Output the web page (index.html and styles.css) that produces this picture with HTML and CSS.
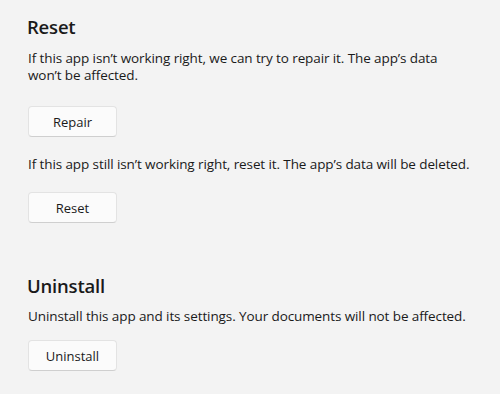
FILE: index.html
```html
<!DOCTYPE html>
<html>
<head>
<meta charset="utf-8">
<link rel="stylesheet" href="styles.css">
</head>
<body>
<main class="page">
  <section class="group">
    <h2 class="title">Reset</h2>
    <p class="desc desc-first">If this app isn’t working right, we can try to repair it. The app’s data won’t be affected.</p>
    <button class="btn btn-repair">Repair</button>
    <p class="desc desc-second">If this app still isn’t working right, reset it. The app’s data will be deleted.</p>
    <button class="btn btn-reset">Reset</button>
  </section>
  <section class="group group-uninstall">
    <h2 class="title">Uninstall</h2>
    <p class="desc desc-third">Uninstall this app and its settings. Your documents will not be affected.</p>
    <button class="btn btn-uninstall">Uninstall</button>
  </section>
</main>
</body>
</html>
```
FILE: styles.css
```css
html, body {
  margin: 0;
  padding: 0;
  background: #f3f3f3;
}
body {
  font-family: "Open Sans", "Noto Sans", sans-serif;
  color: #1a1a1a;
}
.page {
  width: 500px;
  height: 394px;
  padding: 13px 0 0 28px;
  box-sizing: border-box;
  display: flex;
  flex-direction: column;
}
.group {
  display: flex;
  flex-direction: column;
  align-items: flex-start;
}
.group-uninstall {
  margin-top: 49px;
}
.title {
  margin: 0 0 0 -1px;
  font-size: 18.5px;
  font-weight: 600;
  line-height: 28px;
  letter-spacing: -0.2px;
}
.desc {
  margin: 9px 0 0 0;
  font-size: 13.5px;
  line-height: 17px;
  width: 466px;
  letter-spacing: -0.1px;
}
.desc-first {
  width: 420px;
}
.desc-second {
  margin-top: 19px;
}
.desc-third {
  margin-top: 8px;
}
.btn {
  margin-top: 22px;
  width: 89px;
  height: 31px;
  background: #fbfbfb;
  border: 1px solid #e3e3e3;
  border-bottom-color: #cfcfcf;
  border-radius: 4px;
  font-family: inherit;
  font-size: 13px;
  color: #1a1a1a;
  padding: 0;
}
.btn-reset {
  margin-top: 19px;
}
.btn-uninstall {
  margin-top: 15px;
}
```
